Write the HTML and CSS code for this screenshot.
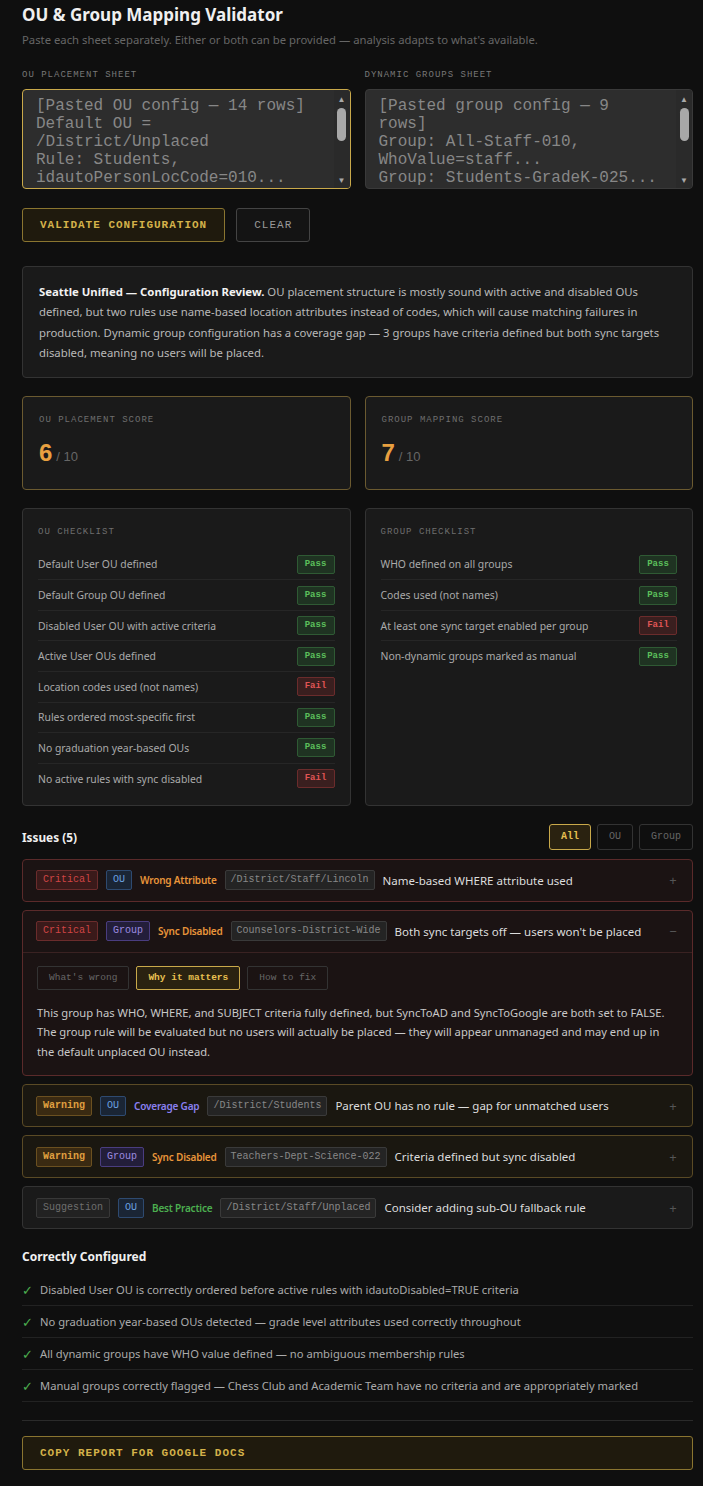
FILE: index.html
```html
<!DOCTYPE html>
<html lang="en">
<head>
    <meta charset="UTF-8">
    <meta name="viewport" content="width=device-width, initial-scale=1.0">
    <title>OU &amp; Group Mapping Validator</title>
    <link rel="stylesheet" href="styles.css">
</head>
<body>
    <div class="app">
        <header class="page-head">
            <h1>OU &amp; Group Mapping Validator</h1>
            <p class="subtitle">Paste each sheet separately. Either or both can be provided — analysis adapts to what's available.</p>
        </header>

        <section class="two-col inputs">
            <div class="field">
                <label for="ouSheet">OU PLACEMENT SHEET</label>
                <div class="sheet-box focused">
                    <textarea id="ouSheet" class="sheet">[Pasted OU config — 14 rows]
Default OU = /District/Unplaced
Rule: Students, idautoPersonLocCode=010...
Rule: Staff, idautoPersonLocName=Lincoln...
Rule: Disabled, idautoDisabled=TRUE...</textarea>
                    <div class="scrollbar">
                        <span class="arrow">▲</span>
                        <span class="thumb"></span>
                        <span class="arrow down">▼</span>
                    </div>
                </div>
            </div>
            <div class="field">
                <label for="groupSheet">DYNAMIC GROUPS SHEET</label>
                <div class="sheet-box">
                    <textarea id="groupSheet" class="sheet">[Pasted group config — 9 rows]
Group: All-Staff-010, WhoValue=staff...
Group: Students-GradeK-025...
Group: Counselors-District-Wide...</textarea>
                    <div class="scrollbar">
                        <span class="arrow">▲</span>
                        <span class="thumb"></span>
                        <span class="arrow down">▼</span>
                    </div>
                </div>
            </div>
        </section>

        <div class="actions">
            <button type="button" class="btn btn-primary">VALIDATE CONFIGURATION</button>
            <button type="button" class="btn">CLEAR</button>
        </div>

        <div class="summary">
            <strong>Seattle Unified — Configuration Review.</strong> OU placement structure is mostly sound with active and disabled OUs defined, but two rules use name-based location attributes instead of codes, which will cause matching failures in production. Dynamic group configuration has a coverage gap — 3 groups have criteria defined but both sync targets disabled, meaning no users will be placed.
        </div>

        <section class="two-col scores">
            <div class="score-card">
                <div class="card-label">OU PLACEMENT SCORE</div>
                <div class="score"><span class="score-num">6</span><span class="score-max">/ 10</span></div>
            </div>
            <div class="score-card">
                <div class="card-label">GROUP MAPPING SCORE</div>
                <div class="score"><span class="score-num">7</span><span class="score-max">/ 10</span></div>
            </div>
        </section>

        <section class="two-col checklists">
            <div class="check-card">
                <div class="card-label">OU CHECKLIST</div>
                <ul class="checklist">
                    <li><span>Default User OU defined</span><span class="badge pass">Pass</span></li>
                    <li><span>Default Group OU defined</span><span class="badge pass">Pass</span></li>
                    <li><span>Disabled User OU with active criteria</span><span class="badge pass">Pass</span></li>
                    <li><span>Active User OUs defined</span><span class="badge pass">Pass</span></li>
                    <li><span>Location codes used (not names)</span><span class="badge fail">Fail</span></li>
                    <li><span>Rules ordered most-specific first</span><span class="badge pass">Pass</span></li>
                    <li><span>No graduation year-based OUs</span><span class="badge pass">Pass</span></li>
                    <li><span>No active rules with sync disabled</span><span class="badge fail">Fail</span></li>
                </ul>
            </div>
            <div class="check-card">
                <div class="card-label">GROUP CHECKLIST</div>
                <ul class="checklist">
                    <li><span>WHO defined on all groups</span><span class="badge pass">Pass</span></li>
                    <li><span>Codes used (not names)</span><span class="badge pass">Pass</span></li>
                    <li><span>At least one sync target enabled per group</span><span class="badge fail">Fail</span></li>
                    <li><span>Non-dynamic groups marked as manual</span><span class="badge pass">Pass</span></li>
                </ul>
            </div>
        </section>

        <section class="issues">
            <div class="issues-head">
                <h2>Issues (5)</h2>
                <div class="filters">
                    <button type="button" class="filter active">All</button>
                    <button type="button" class="filter">OU</button>
                    <button type="button" class="filter">Group</button>
                </div>
            </div>

            <div class="issue critical">
                <div class="issue-row">
                    <span class="sev sev-critical">Critical</span>
                    <span class="kind kind-ou">OU</span>
                    <span class="cat cat-orange">Wrong Attribute</span>
                    <span class="path">/District/Staff/Lincoln</span>
                    <span class="issue-title">Name-based WHERE attribute used</span>
                    <span class="toggle">+</span>
                </div>
            </div>

            <div class="issue critical open">
                <div class="issue-row">
                    <span class="sev sev-critical">Critical</span>
                    <span class="kind kind-group">Group</span>
                    <span class="cat cat-orange">Sync Disabled</span>
                    <span class="path">Counselors-District-Wide</span>
                    <span class="issue-title">Both sync targets off — users won't be placed</span>
                    <span class="toggle">−</span>
                </div>
                <div class="issue-body">
                    <div class="tabs">
                        <button type="button" class="tab">What's wrong</button>
                        <button type="button" class="tab active">Why it matters</button>
                        <button type="button" class="tab">How to fix</button>
                    </div>
                    <p>This group has WHO, WHERE, and SUBJECT criteria fully defined, but SyncToAD and SyncToGoogle are both set to FALSE. The group rule will be evaluated but no users will actually be placed — they will appear unmanaged and may end up in the default unplaced OU instead.</p>
                </div>
            </div>

            <div class="issue warning">
                <div class="issue-row">
                    <span class="sev sev-warning">Warning</span>
                    <span class="kind kind-ou">OU</span>
                    <span class="cat cat-purple">Coverage Gap</span>
                    <span class="path">/District/Students</span>
                    <span class="issue-title">Parent OU has no rule — gap for unmatched users</span>
                    <span class="toggle">+</span>
                </div>
            </div>

            <div class="issue warning">
                <div class="issue-row">
                    <span class="sev sev-warning">Warning</span>
                    <span class="kind kind-group">Group</span>
                    <span class="cat cat-orange">Sync Disabled</span>
                    <span class="path">Teachers-Dept-Science-022</span>
                    <span class="issue-title">Criteria defined but sync disabled</span>
                    <span class="toggle">+</span>
                </div>
            </div>

            <div class="issue suggestion">
                <div class="issue-row">
                    <span class="sev sev-suggestion">Suggestion</span>
                    <span class="kind kind-ou">OU</span>
                    <span class="cat cat-green">Best Practice</span>
                    <span class="path">/District/Staff/Unplaced</span>
                    <span class="issue-title">Consider adding sub-OU fallback rule</span>
                    <span class="toggle">+</span>
                </div>
            </div>
        </section>

        <section class="correct">
            <h2>Correctly Configured</h2>
            <ul class="correct-list">
                <li><span class="tick">✓</span>Disabled User OU is correctly ordered before active rules with idautoDisabled=TRUE criteria</li>
                <li><span class="tick">✓</span>No graduation year-based OUs detected — grade level attributes used correctly throughout</li>
                <li><span class="tick">✓</span>All dynamic groups have WHO value defined — no ambiguous membership rules</li>
                <li><span class="tick">✓</span>Manual groups correctly flagged — Chess Club and Academic Team have no criteria and are appropriately marked</li>
            </ul>
        </section>

        <div class="copy-wrap">
            <button type="button" class="btn btn-primary btn-block">COPY REPORT FOR GOOGLE DOCS</button>
        </div>
    </div>
</body>
</html>
```

FILE: styles.css
```css
body {
    margin: 0;
    background-color: #0f0f0f;
    color: #bbb;
    font-family: "Noto Sans", "Open Sans", sans-serif;
}

.app {
    width: 671px;
    margin-left: 22px;
    padding: 4px 0 17px;
}

/* header */
.page-head h1 {
    margin: 0;
    font-size: 17px;
    line-height: 22px;
    font-weight: 700;
    color: #f0f0f0;
}

.subtitle {
    margin: 6px 0 0;
    font-size: 11.3px;
    line-height: 16px;
    color: #666;
}

.two-col {
    display: grid;
    grid-template-columns: 1fr 1fr;
    gap: 14px;
}

/* inputs */
.inputs {
    margin-top: 21px;
}

.field label {
    display: block;
    font-family: "Liberation Mono", monospace;
    font-size: 9px;
    letter-spacing: 1px;
    color: #777;
    line-height: 12px;
    margin-bottom: 8px;
}

.sheet-box {
    display: flex;
    height: 100px;
    box-sizing: border-box;
    background-color: #2d2d2d;
    border: 1px solid #3a3a3a;
    border-radius: 4px;
    overflow: hidden;
}

.sheet-box.focused {
    border-color: #c9a94a;
}

.sheet {
    flex: 1;
    min-width: 0;
    margin: 0;
    padding: 7px 13px;
    resize: none;
    background: transparent;
    border: none;
    color: #878787;
    font-family: "Liberation Mono", monospace;
    font-size: 16px;
    line-height: 18px;
    outline: none;
    overflow: hidden;
}

.scrollbar {
    width: 16px;
    display: flex;
    flex-direction: column;
    align-items: center;
    padding: 4px 0 3px;
    background-color: #2a2a2a;
}

.arrow {
    font-size: 8px;
    line-height: 10px;
    color: #a8a8a8;
}

.arrow.down {
    margin-top: auto;
}

.thumb {
    width: 9px;
    height: 33px;
    margin-top: 4px;
    border-radius: 5px;
    background-color: #a8a8a8;
}

/* buttons */
.actions {
    display: flex;
    gap: 11px;
    margin-top: 19px;
}

.btn {
    height: 34px;
    padding: 0 17px;
    background-color: #141414;
    border: 1px solid #444;
    border-radius: 3px;
    color: #999;
    font-family: "Liberation Mono", monospace;
    font-size: 11px;
    letter-spacing: 1px;
    cursor: pointer;
}

.btn-primary {
    background-color: #1f1a0d;
    border-color: #8a7530;
    color: #d4b24a;
    font-weight: bold;
}

.btn-block {
    width: 100%;
    text-align: left;
    padding: 0 17px;
}

/* summary */
.summary {
    margin-top: 24px;
    padding: 15px 15px 13px 16px;
    background-color: #1a1a1a;
    border: 1px solid #333;
    border-radius: 4px;
    font-size: 11.35px;
    line-height: 20.4px;
    color: #b8b8b8;
}

.summary strong {
    color: #f2f2f2;
}

/* scores */
.scores {
    margin-top: 18px;
}

.score-card {
    height: 94px;
    box-sizing: border-box;
    padding: 17px 16px;
    background-color: #1a1a1a;
    border: 1px solid #6b5a30;
    border-radius: 4px;
}

.card-label {
    font-family: "Liberation Mono", monospace;
    font-size: 9px;
    letter-spacing: 1px;
    line-height: 12px;
    color: #6e6e6e;
}

.score {
    margin-top: 13px;
    display: flex;
    align-items: baseline;
    gap: 4px;
}

.score-num {
    font-family: "Liberation Sans", sans-serif;
    font-size: 24px;
    font-weight: bold;
    color: #e8a040;
    line-height: 28px;
}

.score-max {
    font-family: "Liberation Sans", sans-serif;
    font-size: 13px;
    color: #666;
}

/* checklists */
.checklists {
    margin-top: 18px;
}

.check-card {
    height: 298px;
    box-sizing: border-box;
    padding: 17px 15px;
    background-color: #1a1a1a;
    border: 1px solid #333;
    border-radius: 4px;
}

.checklist {
    list-style: none;
    margin: 12px 0 0;
    padding: 0;
}

.checklist li {
    display: flex;
    align-items: center;
    justify-content: space-between;
    height: 29.6px;
    border-bottom: 1px solid #262626;
    font-size: 10.4px;
    color: #aaa;
}

.checklist li:last-child {
    border-bottom: none;
}

.badge {
    box-sizing: border-box;
    width: 38px;
    height: 19px;
    line-height: 17px;
    text-align: center;
    border-radius: 2px;
    font-family: "Liberation Mono", monospace;
    font-size: 9px;
    font-weight: bold;
}

.badge.pass {
    background-color: #1f3322;
    border: 1px solid #2f5a34;
    color: #5cc05c;
}

.badge.fail {
    background-color: #3a1f1f;
    border: 1px solid #6b2c2c;
    color: #e05555;
}

/* issues */
.issues {
    margin-top: 18px;
}

.issues-head {
    display: flex;
    align-items: center;
    justify-content: space-between;
    margin-bottom: 9px;
}

h2 {
    margin: 0;
    font-size: 11.8px;
    font-weight: 700;
    color: #f0f0f0;
}

.filters {
    display: flex;
    gap: 6px;
}

.filter {
    height: 26px;
    padding: 0 11px;
    background-color: transparent;
    border: 1px solid #333;
    border-radius: 3px;
    color: #666;
    font-family: "Liberation Mono", monospace;
    font-size: 10px;
}

.filter.active {
    background-color: #2a2210;
    border-color: #c9a94a;
    color: #e8c050;
    font-weight: bold;
}

.issue {
    margin-bottom: 8px;
    border: 1px solid #333;
    border-radius: 4px;
    background-color: #1a1a1a;
}

.issue.critical {
    background-color: #1b1313;
    border-color: #5a2a2a;
}

.issue.warning {
    background-color: #1a1710;
    border-color: #5a4a25;
}

.issue-row {
    display: flex;
    align-items: center;
    gap: 8px;
    height: 41px;
    padding: 0 13px;
}

.sev,
.kind,
.path {
    box-sizing: border-box;
    height: 20px;
    line-height: 18px;
    padding: 0 6px;
    border: 1px solid #383838;
    border-radius: 2px;
    font-family: "Liberation Mono", monospace;
    font-size: 10px;
    white-space: nowrap;
}

.sev-critical {
    background-color: #3a1a1a;
    border-color: #6b2c2c;
    color: #d04545;
}

.sev-warning {
    background-color: #3a2a12;
    border-color: #6b5020;
    color: #e0a040;
    font-weight: bold;
}

.sev-suggestion {
    background-color: #222;
    color: #6e6e6e;
}

.kind-ou {
    background-color: #1a2535;
    border-color: #2e4a70;
    color: #6aa0e0;
}

.kind-group {
    background-color: #231e3a;
    border-color: #4a3d80;
    color: #9d8ce0;
}

.cat {
    font-size: 10px;
    font-weight: 600;
    letter-spacing: -0.2px;
    white-space: nowrap;
}

.cat-orange { color: #e8953a; }
.cat-purple { color: #8a80f0; }
.cat-green { color: #4caf50; }

.path {
    background-color: #242424;
    border-color: #3a3a3a;
    color: #888;
    padding: 0 5px;
}

.issue-title {
    flex: 1;
    min-width: 0;
    font-size: 11.5px;
    color: #ddd;
    white-space: nowrap;
}

.toggle {
    width: 12px;
    text-align: center;
    color: #555;
    font-size: 13px;
}

.issue-body {
    border-top: 1px solid #3a2222;
    padding: 13px 14px 14px;
}

.tabs {
    display: flex;
    gap: 7px;
}

.tab {
    height: 24px;
    padding: 0 11px;
    background-color: transparent;
    border: 1px solid #333;
    border-radius: 2px;
    color: #666;
    font-family: "Liberation Mono", monospace;
    font-size: 9.5px;
}

.tab.active {
    background-color: #2a2210;
    border-color: #c9a94a;
    color: #e8c050;
    font-weight: bold;
}

.issue-body p {
    margin: 13px 0 0;
    font-size: 11.2px;
    line-height: 19.5px;
    color: #c8c8c8;
}

/* correctly configured */
.correct {
    margin-top: 19px;
}

.correct h2 {
    font-size: 12px;
}

.correct-list {
    list-style: none;
    margin: 9px 0 0;
    padding: 0;
}

.correct-list li {
    display: flex;
    align-items: center;
    height: 31px;
    border-bottom: 1px solid #222;
    font-size: 11.2px;
    color: #aaa;
}

.tick {
    width: 18px;
    color: #4caf50;
    font-size: 13px;
}

.copy-wrap {
    margin-top: 18px;
    padding-top: 15px;
    border-top: 1px solid #2a2a2a;
}
```
